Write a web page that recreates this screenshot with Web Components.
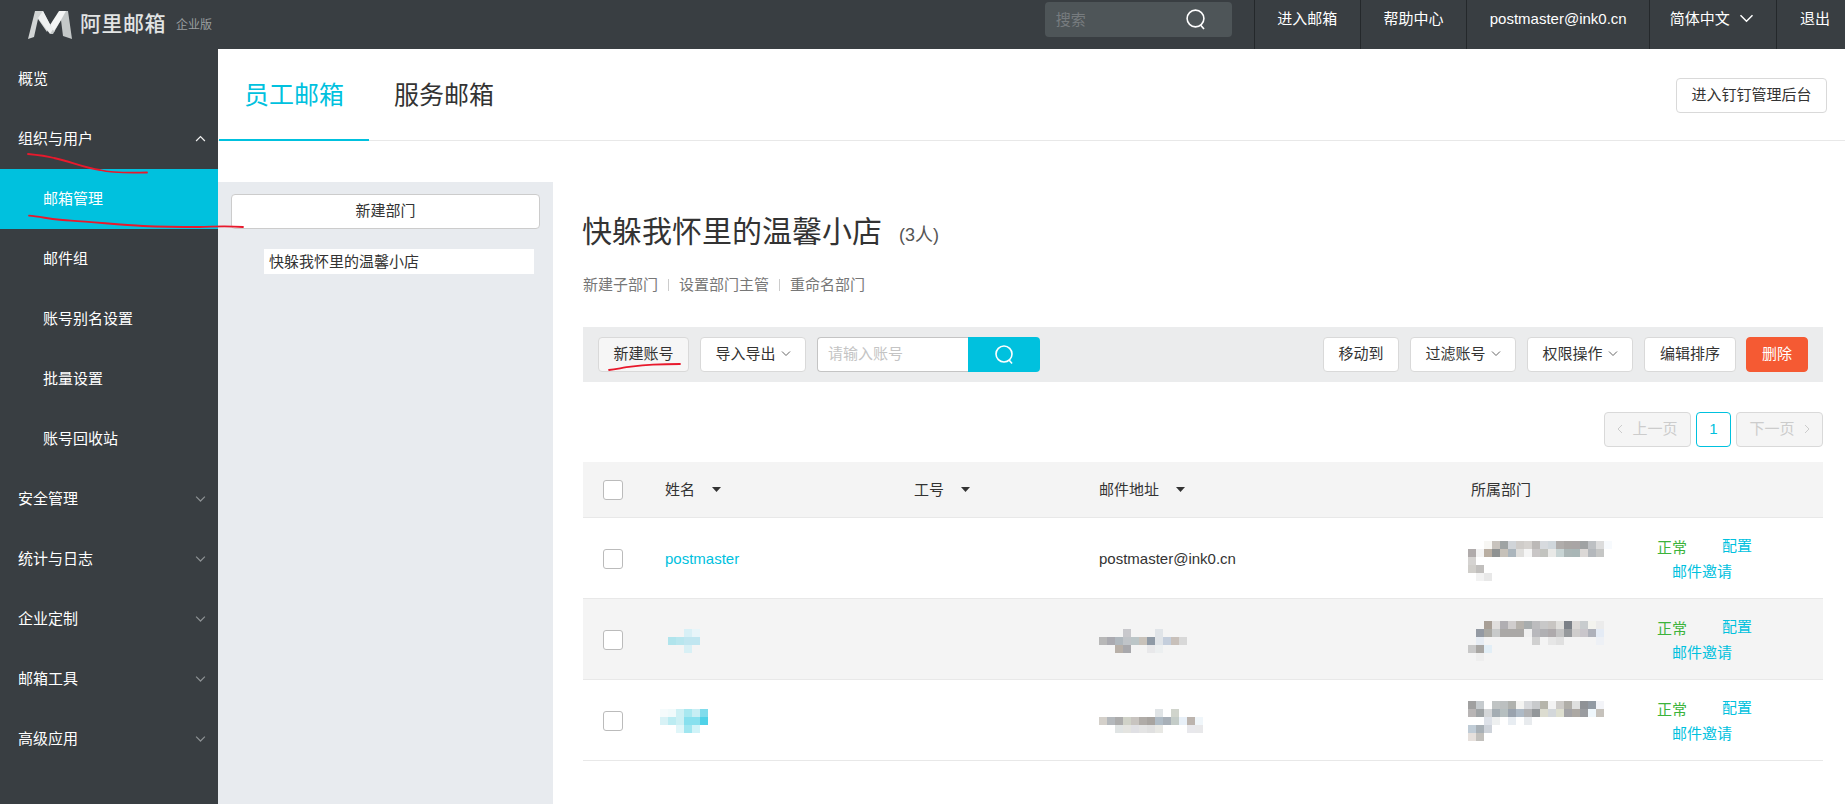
<!DOCTYPE html>
<html lang="zh">
<head>
<meta charset="utf-8">
<title>阿里邮箱企业版</title>
<style>
  html, body { margin: 0; height: 100%; }
  body {
    font: 15px/1.4 "Liberation Sans", "Noto Sans CJK SC", sans-serif;
    color: #333;
    background: #fff;
    position: relative;
    overflow: hidden;
  }
  .layout { display: flex; height: 755px; }
</style>
</head>
<body>
<mail-header></mail-header>
<div class="layout">
  <side-nav></side-nav>
  <mail-main></mail-main>
</div>
<pen-marks></pen-marks>

<script>
const chevron = (dir, color, w = 10, sw = 1) => {
  const pts = dir === 'up' ? '1,5.5 5,1.5 9,5.5' : dir === 'left' ? '5,1 1,5 5,9' : dir === 'right' ? '1,1 5,5 1,9' : '1,1.5 5,5.5 9,1.5';
  const vb = dir === 'left' || dir === 'right' ? '0 0 6 10' : '0 0 10 7';
  const h = dir === 'left' || dir === 'right' ? w * 10 / 6 : w * 0.7;
  return `<svg width="${w}" height="${h}" viewBox="${vb}" fill="none" stroke="${color}" stroke-width="${sw}"><polyline points="${pts}"/></svg>`;
};

class MailHeader extends HTMLElement {
  connectedCallback() {
    this.attachShadow({ mode: 'open' });
    this.shadowRoot.innerHTML = `
      <style>
        :host { display: flex; height: 49px; background: #393e42; color: #fff; align-items: stretch; }
        .logo { display: flex; align-items: center; padding-left: 28px; }
        .logo svg { display: block; }
        .brand { margin-left: 8px; font-size: 21px; letter-spacing: .5px; color: #e2e4e4; font-weight: 500; width: 88px; white-space: nowrap; position: relative; top: -1px; }
        .edition { margin-left: 8px; font-size: 12px; color: #9a9ea0; position: relative; top: 1px; }
        .search {
          margin-left: auto; margin-top: 2px; width: 187px; height: 35px; background: #4e5558; border-radius: 4px;
          display: flex; align-items: center; padding-left: 11px; box-sizing: border-box; color: #777c7f; font-size: 15px;
        }
        .search svg { margin-left: 100px; flex: none; }
        nav { display: flex; margin-left: 22px; }
        nav a { display: flex; align-items: center; gap: 9px; padding: 0 22.6px 12px; border-left: 1px solid #24282b; white-space: nowrap; }
        nav a.lang { padding-left: 19.5px; }
        nav a:last-child { padding-right: 15px; }
      </style>
      <div class="logo">
        <svg width="44" height="29" viewBox="0 0 44 29">
          <path d="M0 29 L7 1 L15 1 L22 15 L19 22 L10 9 L6 27 Z" fill="#d2d5d5"/>
          <path d="M15 1 L23 16 L27 21 L22 24 L10 8 Z" fill="#eef0f0"/>
          <path d="M22 24 L37 1 L40 1 L44 29 L35 26 L33 10 L25 24 Z" fill="#c4c8c8"/>
          <path d="M31 1 L38 1 L33 10 L26 21 L22 15 Z" fill="#f4f5f5"/>
        </svg>
        <span class="brand">阿里邮箱</span>
        <span class="edition">企业版</span>
      </div>
      <div class="search">
        <span>搜索</span>
        <svg width="20" height="21" viewBox="0 0 20 21" fill="none" stroke="#fff" stroke-width="1.6"><circle cx="9.5" cy="9.5" r="8.4"/><path d="M14.5 16 L18 20"/></svg>
      </div>
      <nav>
        <a>进入邮箱</a><a>帮助中心</a><a>postmaster@ink0.cn</a>
        <a class="lang">简体中文 ${chevron('down', '#fff', 15)}</a>
        <a>退出</a>
      </nav>`;
  }
}

class NavItem extends HTMLElement {
  connectedCallback() {
    this.attachShadow({ mode: 'open' });
    const open = this.hasAttribute('open');
    const arrow = this.hasAttribute('parent') ? chevron(open ? 'up' : 'down', open ? '#f0f0f0' : '#8c9093', 11, 1.1) : '';
    this.shadowRoot.innerHTML = `
      <style>
        :host { display: flex; align-items: center; justify-content: space-between; height: 60px; padding: 0 12px 2px 18px; color: #fff; box-sizing: border-box; }
        :host([sub]) { padding-left: 43px; }
        :host([active]) { background: #00c1de; }
        svg { display: block; position: relative; top: 1px; }
      </style>
      <slot></slot>${arrow}`;
  }
}

class SideNav extends HTMLElement {
  connectedCallback() {
    this.attachShadow({ mode: 'open' });
    this.shadowRoot.innerHTML = `
      <style>
        :host { display: block; width: 218px; flex: none; background: #393e42; }
      </style>
      <nav-item>概览</nav-item>
      <nav-item parent open>组织与用户</nav-item>
      <nav-item sub active>邮箱管理</nav-item>
      <nav-item sub>邮件组</nav-item>
      <nav-item sub>账号别名设置</nav-item>
      <nav-item sub>批量设置</nav-item>
      <nav-item sub>账号回收站</nav-item>
      <nav-item parent>安全管理</nav-item>
      <nav-item parent>统计与日志</nav-item>
      <nav-item parent>企业定制</nav-item>
      <nav-item parent>邮箱工具</nav-item>
      <nav-item parent>高级应用</nav-item>`;
  }
}

class UiButton extends HTMLElement {
  connectedCallback() {
    this.attachShadow({ mode: 'open' });
    const arrow = this.hasAttribute('caret') ? chevron('down', '#666', 10) : '';
    this.shadowRoot.innerHTML = `
      <style>
        :host {
          display: inline-flex; align-items: center; justify-content: center; gap: 5px; box-sizing: border-box; height: 35px; padding-bottom: 2px;
          background: #fff; border: 1px solid #d9d9d9; border-radius: 4px; color: #333; white-space: nowrap; flex: none;
        }
        :host([hot]) { background: #f55a33; border-color: #f55a33; color: #fff; }
        :host([soft]) { background: #f6f6f6; }
        :host([off]) { background: #f5f5f5; color: #ccc; }
        :host([current]) { border-color: #00c1de; color: #00c1de; }
      </style>
      <slot></slot>${arrow}`;
  }
}

class PixelBlur extends HTMLElement {
  // mosaic of 8px cells, rows separated by "/", "-" leaves a cell empty
  connectedCallback() {
    this.attachShadow({ mode: 'open' });
    const rows = this.getAttribute('cells').split('/').map(r => r.trim().split(/\s+/));
    const cells = rows.map(r => `<div class="r">${r.map(c => `<i style="background:${c === '-' ? 'transparent' : '#' + c}"></i>`).join('')}</div>`).join('');
    this.shadowRoot.innerHTML = `
      <style>
        :host { display: block; }
        .r { display: flex; height: 8px; }
        i { display: block; width: 8px; height: 8px; flex: none; }
      </style>${cells}`;
  }
}

class UserRow extends HTMLElement {
  connectedCallback() {
    this.attachShadow({ mode: 'open' });
    this.shadowRoot.innerHTML = `
      <style>
        :host { display: grid; grid-template-columns: 82px 249px 185px 372px 186px 1fr; align-items: center; height: 81px; box-sizing: border-box; border-bottom: 1px solid #e8e8e8; }
        :host([shade]) { background: #f4f4f4; }
        .box { margin-left: 20px; width: 20px; height: 20px; box-sizing: border-box; background: #fff; border: 1px solid #bbb; border-radius: 3px; margin-top: 2px; }
        .ops { line-height: 26px; margin-top: 1px; }
        .ok { color: #3bb33b; position: relative; top: 2px; }
        .ops a { color: #00c1de; }
        .set { margin-left: 35px; }
        .inv { display: block; padding-left: 15px; }
      </style>
      <div class="box"></div>
      <slot name="name"></slot>
      <div></div>
      <slot name="mail"></slot>
      <slot name="dept"></slot>
      <div class="ops"><span class="ok">正常</span><a class="set">配置</a><a class="inv">邮件邀请</a></div>`;
  }
}

class UserTable extends HTMLElement {
  connectedCallback() {
    this.attachShadow({ mode: 'open' });
    const caret = '<svg width="9" height="5" viewBox="0 0 9 5" style="margin-left:17px"><path d="M0 0H9L4.5 5Z" fill="#333"/></svg>';
    this.shadowRoot.innerHTML = `
      <style>
        :host { display: block; }
        .head { display: grid; grid-template-columns: 82px 249px 185px 372px 186px 1fr; align-items: center; height: 56px; box-sizing: border-box; background: #f4f4f4; border-bottom: 1px solid #e8e8e8; }
        .box { margin-left: 20px; width: 20px; height: 20px; box-sizing: border-box; background: #fff; border: 1px solid #bbb; border-radius: 3px; }
        .th { display: flex; align-items: center; }
      </style>
      <div class="head">
        <div class="box"></div>
        <div class="th">姓名${caret}</div>
        <div class="th">工号${caret}</div>
        <div class="th">邮件地址${caret}</div>
        <div class="th">所属部门</div>
        <div></div>
      </div>
      <slot></slot>`;
  }
}

class MailMain extends HTMLElement {
  connectedCallback() {
    this.attachShadow({ mode: 'open' });
    this.shadowRoot.innerHTML = `
      <style>
        :host { display: flex; flex-direction: column; flex: 1; min-width: 0; }
        .tabs { display: flex; height: 92px; box-sizing: border-box; border-bottom: 1px solid #e8e8e8; align-items: stretch; padding: 0 18px 0 1px; flex: none; }
        .tab { width: 150px; text-align: center; font-size: 25px; line-height: 37px; padding-top: 28px; box-sizing: border-box; color: #333; }
        .tab.on { color: #00c1de; border-bottom: 2px solid #00c1de; margin-bottom: -1px; }
        .dd { margin-left: auto; margin-top: 29px; width: 151px; }
        .body { display: flex; flex: 1; padding-top: 41px; min-height: 0; }
        .depts { width: 335px; flex: none; background: #e8ebef; padding: 12px 13px 0; box-sizing: border-box; }
        .depts ui-button { display: flex; width: 309px; margin-bottom: 20px; background: #fff; border-color: #ccc; }
        .dept { margin-left: 33px; width: 270px; height: 25px; background: #fff; line-height: 25px; padding-left: 5px; box-sizing: border-box; white-space: nowrap; }
        .panel { flex: 1; padding: 32px 22px 0 30px; min-width: 0; }
        h1 { margin: 0 0 0 -1px; font-size: 30px; font-weight: 400; line-height: 36px; color: #333; display: flex; align-items: center; }
        h1 small { font-size: 18px; margin-left: 17px; position: relative; top: 3px; color: #555; }
        .links { display: flex; align-items: center; margin-top: 24px; color: #777; line-height: 22px; }
        .links i { width: 1px; height: 12px; background: #ccc; margin: 0 10px; }
        .bar { display: flex; align-items: center; gap: 11px; height: 55px; background: #ebeced; padding: 0 15px; margin-top: 31px; }
        .find { display: flex; height: 35px; width: 223px; flex: none; }
        .find span { flex: 1; box-sizing: border-box; background: #fff; border: 1px solid #c4c4c4; border-right: 0; border-radius: 4px 0 0 4px; color: #c4c4c4; padding-left: 10px; line-height: 31px; }
        .find b { width: 72px; background: #00c1de; border-radius: 0 4px 4px 0; display: flex; align-items: center; justify-content: center; }
        .sp { flex: 1; }
        .pages { display: flex; justify-content: flex-end; gap: 5px; margin: 30px 0 15px; }
        .pages svg { display: block; }
        a { color: #00c1de; }
      </style>
      <div class="tabs">
        <div class="tab on">员工邮箱</div>
        <div class="tab">服务邮箱</div>
        <ui-button class="dd">进入钉钉管理后台</ui-button>
      </div>
      <div class="body">
        <div class="depts">
          <ui-button>新建部门</ui-button>
          <div class="dept">快躲我怀里的温馨小店</div>
        </div>
        <div class="panel">
          <h1>快躲我怀里的温馨小店<small>(3人)</small></h1>
          <div class="links"><span>新建子部门</span><i></i><span>设置部门主管</span><i></i><span>重命名部门</span></div>
          <div class="bar">
            <ui-button soft style="width:91px">新建账号</ui-button>
            <ui-button caret style="width:106px">导入导出</ui-button>
            <div class="find"><span>请输入账号</span><b><svg width="21" height="21" viewBox="0 0 21 21" fill="none" stroke="#fff" stroke-width="1.6"><circle cx="10" cy="10" r="8"/><path d="M15 16 L18 19.5"/></svg></b></div>
            <div class="sp"></div>
            <ui-button style="width:76px">移动到</ui-button>
            <ui-button caret style="width:106px">过滤账号</ui-button>
            <ui-button caret style="width:106px">权限操作</ui-button>
            <ui-button style="width:92px">编辑排序</ui-button>
            <ui-button hot style="width:62px;margin-left:-1px">删除</ui-button>
          </div>
          <div class="pages">
            <ui-button off style="width:87px">${chevron('left', '#ccc', 6)}&nbsp;上一页</ui-button>
            <ui-button current style="width:35px">1</ui-button>
            <ui-button off style="width:87px">下一页&nbsp;${chevron('right', '#ccc', 6)}</ui-button>
          </div>
          <user-table>
            <user-row>
              <a slot="name">postmaster</a>
              <span slot="mail">postmaster@ink0.cn</span>
              <pixel-blur slot="dept" style="margin:6px 0 0 -3px" cells="- - f7f6f3 c8c3bd 9ea3a3 d0d4d8 cfccc9 d5d2cf bcb9b7 d7dade d0d7dc b0adab a9a6a4 a9a5a5 9fa2a3 bdc0c3 dcdcdc f7fafd/b0abab f3f3f3 b9aea2 8f9292 c6c1b9 abb5bc dfdedc f5f5f5 c9c6c6 c2c3bf e9e9e7 c8d4d4 abb6b6 a9b6b6 dbd8d6 b4b8bc c5c6c5/d5d3d1/d0ceca c1bfbd/- f2f2f2 e8e8e8"></pixel-blur>
            </user-row>
            <user-row shade>
              <pixel-blur slot="name" cells="- - d8f0f6 e8f5f9/b0e4ec b8e6ee c0e6f0 c0e6f0/- - d8f0f5" style="margin:4px 0 0 3px"></pixel-blur>
              <pixel-blur slot="mail" cells="- - - c8c8cc - - - e0e4e8/b8b8b8 aaaab0 b0b8be c0c4c8 bcc6c8 c8c2ba 8f9aa6 e0e4e8 c4cedc c8c0ba d8d8d8/- - b8b0a8 a8a8ac - - e8e8ea eceff0" style="margin-top:4px"></pixel-blur>
              <pixel-blur slot="dept" style="margin:4px 0 0 -3px" cells="- - a89f96 e0dedd b0aeb2 d0cdcd b6b2ac a8adae bcbcbe c8c8c8 c8c5c2 e0dfdc 7b8087 dbd8d6 c8ccce f3f3ee ebebeb/- 949aa3 aaa9a4 c8caca aaa8a6 aaa8a6 aaa8a6 f0f0f0 b8b8bc b0b0b3 aeaaac c4c4c4 96999c cfcdcc c9c6cb aeb1ba e4ebf5/- e6ecf3 - - - - - - d0d0d0 - e6e6e6 e0e0e0 - - - - edf0f5/c8c8c8 a8a6a3 e2eef6/- eeeeee"></pixel-blur>
            </user-row>
            <user-row>
              <pixel-blur slot="name" cells="f5fbfc f0fafb cdf0f4 a8e8f0 c8eef4 80dcec/d8f2f6 bcecf2 ccf0f4 88e0ee 88e0ee 50d2e8/- - e0f6f9 a0e6f0 d0f3f8" style="margin:2px 0 0 -5px"></pixel-blur>
              <pixel-blur slot="mail" style="margin-top:2px" cells="- - - - - - - e0e4e6 - d0d4cc/d4d0ca b4b8bc acacac d0d2c8 c8c4c0 b0aca8 a8a4a0 b0bcc6 a8b0b8 c4ccc8 e8f0f8 bcb4ae f0f6fa/- - e0e4e4 e4e4e0 e0e0e4 e4e4e4 e0e0e0 e8e8e4 - - - e8e8ec e8e8ea"></pixel-blur>
              <pixel-blur slot="dept" style="margin:2px 0 0 -3px" cells="a0a0a0 c6cbce - c0c4c4 bcc0c0 b0b2ae f4f4f2 d8dadd c8cacc b6b5ab f3f3f3 cdcbc8 b0aea8 dfe0df 8f9296 929aa3 f3f4f8/b8b5b5 9fa3a5 d4d6d8 a4adb3 b6bfc0 9aa3ae aebac6 b0b1b3 93979a dcdcd0 d3d7da dedfd0 a3a3a6 aca8a3 9a9ca0 eff7fc c6c2bc/- - dde1e8 eef0f0 - e8edf2 - e8ebee/c0ccd6 a8b0b6 ced3da/e6e0dc c2c0bc"></pixel-blur>
            </user-row>
          </user-table>
        </div>
      </div>`;
  }
}

class PenMarks extends HTMLElement {
  // red pen strokes someone drew over the screenshot
  connectedCallback() {
    this.attachShadow({ mode: 'open' });
    this.shadowRoot.innerHTML = `
      <style>
        :host { position: absolute; left: 0; top: 0; pointer-events: none; }
        svg { display: block; }
      </style>
      <svg width="1845" height="804" fill="none" stroke="#e8192c" stroke-width="1.8" stroke-linecap="round">
        <path d="M28 154 C38 155 46 156 54 158 C72 162 84 168 100 170 C112 173 130 173 147 172.5"/>
        <path d="M29 215.7 C42 217 56 220 71 220.7 C95 222 120 225 143 226 C165 227 185 227 200 227 C212 227 220 225.5 243 227"/>
        <path d="M609 370 C617 369 624 367.5 631 366.7 C640 365.5 646 365 653 364.7 C662 364.2 672 364 680 364"/>
      </svg>`;
  }
}

customElements.define('mail-header', MailHeader);
customElements.define('nav-item', NavItem);
customElements.define('side-nav', SideNav);
customElements.define('ui-button', UiButton);
customElements.define('pixel-blur', PixelBlur);
customElements.define('user-row', UserRow);
customElements.define('user-table', UserTable);
customElements.define('mail-main', MailMain);
customElements.define('pen-marks', PenMarks);
</script>
</body>
</html>
